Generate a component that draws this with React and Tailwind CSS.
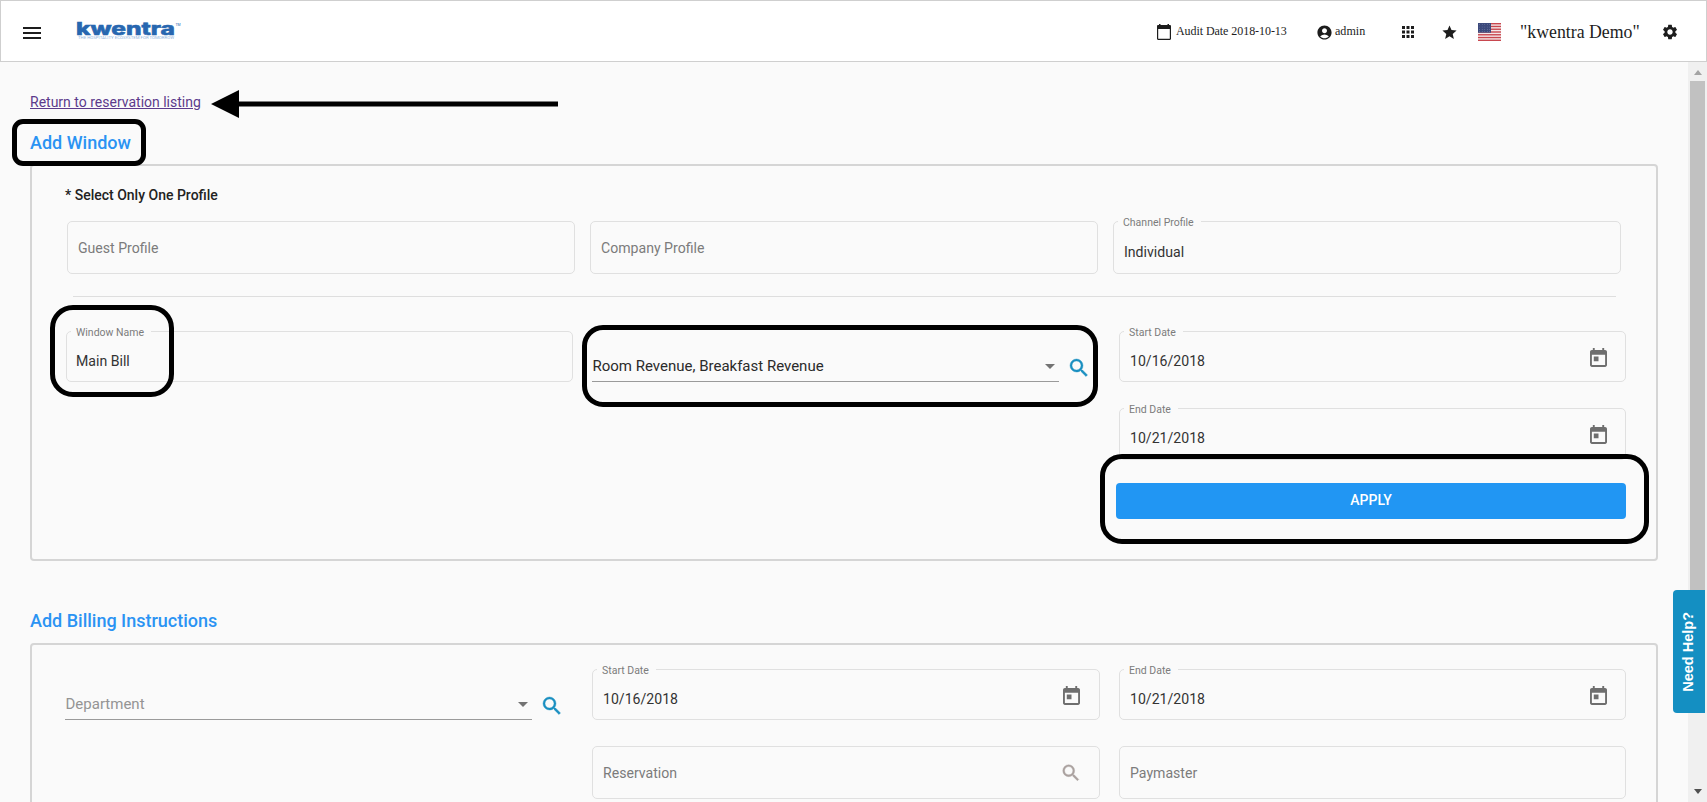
import React from "react";
import { MdMenu, MdAccountCircle, MdApps, MdStar, MdSettings } from "react-icons/md";

function SearchIcon({ className }) {
  return (
    <svg viewBox="0 0 24 24" fill="currentColor" stroke="currentColor" strokeWidth="0.400" className={className}>
      <path d="M15.500 14h-.79l-.28-.27A6.471 6.471 0 0 0 16 9.500 6.500 6.500 0 1 0 9.500 16c1.610 0 3.090-.59 4.230-1.570l.27.28v.79l5 4.990L20.490 19l-4.990-5zm-6 0C7.010 14 5 11.990 5 9.500S7.010 5 9.500 5 14 7.010 14 9.500 11.990 14 9.500 14z" />
    </svg>
  );
}

function CalendarIcon() {
  return (
    <svg viewBox="0 0 18 20" preserveAspectRatio="none" className="mt-px h-[19px] w-[17px]" fill="#6e6e6e">
      <path d="M16 2h-1V0h-2v2H5V0H3v2H2C.9 2 0 2.900 0 4v14c0 1.100.9 2 2 2h14c1.100 0 2-.9 2-2V4c0-1.100-.9-2-2-2zm0 16H2V7h14v11zM4 9h5v5H4z" />
    </svg>
  );
}

function AuditCalendarIcon() {
  return (
    <svg viewBox="0 0 14 16" className="h-[16px] w-[14px]" fill="#1d1d1d">
      <path d="M2 0h1.500v1h7V0H12v1h.8c.7 0 1.200.5 1.200 1.200v12.600c0 .7-.5 1.200-1.200 1.200H1.200C.5 16 0 15.500 0 14.800V2.200C0 1.500.5 1 1.200 1H2zM1.200 5v9.800h11.600V5z" />
    </svg>
  );
}

function Outlined({ className, label, value, placeholder, icon, pad = "pl-[10px]" }) {
  return (
    <div className={`relative flex items-center justify-between rounded-[5px] border border-[#e0e0e0] ${pad} ${className}`}>
      {label && (
        <span className="absolute left-[4px] top-[-6px] bg-[#fafafa] pl-[5px] pr-[7px] text-[10.500px] leading-[13px] text-[#7c7c7c]">
          {label}
        </span>
      )}
      {value ? (
        <span className="pt-[8px] text-[14.100px] leading-5 text-[#333]">{value}</span>
      ) : (
        <span className="text-[14.100px] leading-5 text-[#7c7c7c]">{placeholder}</span>
      )}
      {icon}
    </div>
  );
}

function SelectLine({ className, text, muted }) {
  return (
    <div className={`flex items-end ${className}`}>
      <div className="flex h-[32px] w-[467px] items-center justify-between border-b border-[#9a9a9a] pl-[0.500px] pt-px">
        <span className={`text-[15px] leading-5 ${muted ? "text-[#949494]" : "text-[#2b2b2b]"}`}>{text}</span>
        <svg viewBox="0 0 10 5" className="mr-[4px] h-[5px] w-[10px]"><path d="M0 0h10L5 5z" fill="#737373" /></svg>
      </div>
      <SearchIcon className="mb-[2px] ml-[8px] size-[24px] text-[#1a8fc1]" />
    </div>
  );
}

function Flag() {
  return (
    <svg viewBox="0 0 23 18" className="h-[18px] w-[23px]">
      <rect width="23" height="18" fill="#f4e8e8" />
      {[0, 1, 2, 3, 4, 5, 6].map((i) => (
        <rect key={i} y={i * 2.77} width="23" height="1.385" fill="#c8474f" />
      ))}
      <rect width="13" height="9.700" fill="#3c4a7c" />
      {[1.6, 4, 6.400, 8.600].map((y) =>
        [1.6, 4.200, 6.800, 9.400, 11.600].map((x) => <circle key={`${x}-${y}`} cx={x} cy={y} r="0.350" fill="#a7aecb" />)
      )}
    </svg>
  );
}

function Logo() {
  return (
    <svg viewBox="0 0 108 30" className="block h-[30px] w-[108px] overflow-visible">
      <text x="0" y="19.300" textLength="99" lengthAdjust="spacingAndGlyphs" fontFamily="Inter" fontWeight="800" fontSize="17" fill="#2767b0" stroke="#2767b0" strokeWidth="0.500">kwentra</text>
      <text x="99.500" y="10" fontFamily="Roboto" fontSize="3.500" fill="#2767b0">TM</text>
      <text x="2" y="23.300" textLength="96" lengthAdjust="spacingAndGlyphs" fontFamily="Roboto" fontSize="3" fill="#8fb3dc">THE HOSPITALITY ECOSYSTEM FOR TOMORROW</text>
    </svg>
  );
}

function Header() {
  return (
    <header className="flex h-[62px] shrink-0 items-center border border-[#cfcfcf] bg-white text-[#1d1d1d]">
      <MdMenu className="ml-[19px] mt-[3px] size-[24px]" />
      <div className="ml-[32px]"><Logo /></div>
      <div className="ml-auto flex items-center pt-[2px] font-['Liberation_Serif',serif]">
        <AuditCalendarIcon />
        <span className="-mt-[3px] ml-[5px] w-[111px] whitespace-nowrap text-[12px] tracking-[-0.060px]">Audit Date 2018-10-13</span>
        <MdAccountCircle className="ml-[29px] size-[17px]" />
        <span className="-mt-[2px] ml-[2px] w-[30px] text-[12.100px]">admin</span>
        <MdApps className="ml-[34px] size-[18px]" />
        <MdStar className="ml-[24px] size-[17px]" />
        <div className="ml-[20px]"><Flag /></div>
        <span className="ml-[19px] w-[121px] whitespace-nowrap text-[17.800px] leading-6">"kwentra Demo"</span>
        <MdSettings className="ml-[20px] mr-[27px] size-[18px]" />
      </div>
    </header>
  );
}

function Callout({ className }) {
  return <div className={`pointer-events-none absolute border-[5px] border-black ${className}`} />;
}

export default function App() {
  return (
    <div className="relative flex h-[802px] w-[1707px] flex-col overflow-hidden bg-[#fafafa] font-['Roboto',sans-serif]">
      <Header />
      <div className="flex min-h-0 flex-1">
        <main className="w-[1688px] overflow-hidden pl-[30px]">
          <a className="mt-[30px] block h-[20px] w-fit text-[14px] leading-5 text-[#5c3a8c] underline">Return to reservation listing</a>
          <h2 className="mt-[19px] h-[24px] text-[18px] font-medium leading-6 text-[#2a93f3]">Add Window</h2>

          <section className="mt-[9px] h-[397px] w-[1628px] rounded-[4px] border-2 border-[#d5d5d5] pl-[33px]">
            <h3 className="mt-[19px] h-[20px] text-[14px] font-medium leading-5 text-[#222]">* Select Only One Profile</h3>
            <div className="ml-[2px] mt-[16px] flex gap-[15px]">
              <Outlined className="h-[53px] w-[508px]" placeholder="Guest Profile" />
              <Outlined className="h-[53px] w-[508px]" placeholder="Company Profile" />
              <Outlined className="h-[53px] w-[508px]" label="Channel Profile" value="Individual" />
            </div>
            <hr className="ml-[8px] mt-[22px] w-[1543px] border-[#dedede]" />
            <div className="ml-px mt-[34px] flex">
              <Outlined className="h-[51px] w-[507px]" pad="pl-[9px]" label="Window Name" value="Main Bill" />
              <SelectLine className="ml-[19px] h-[51px] w-[527px]" text="Room Revenue, Breakfast Revenue" />
              <div className="-ml-[3px]">
                <Outlined className="ml-[3px] h-[51px] w-[507px] pr-[18px]" label="Start Date" value="10/16/2018" icon={<CalendarIcon />} />
                <Outlined className="ml-[3px] mt-[26px] h-[52px] w-[507px] pr-[18px]" label="End Date" value="10/21/2018" icon={<CalendarIcon />} />
                <button className="mt-[23px] flex h-[36px] w-[510px] items-center justify-center rounded-[4px] bg-[#2196f3] pb-px text-[14px] font-medium text-white">
                  APPLY
                </button>
              </div>
            </div>
          </section>

          <h2 className="mt-[48px] h-[24px] text-[18px] font-medium leading-6 text-[#2a93f3]">Add Billing Instructions</h2>
          <section className="mt-[10px] h-[396px] w-[1628px] rounded-[4px] border-2 border-[#d5d5d5] pl-[33px]">
            <div className="mt-[24px] flex">
              <SelectLine className="h-[51px] w-[527px]" text="Department" muted />
              <div className="flex flex-col gap-[26px]">
                <Outlined className="h-[51px] w-[508px] pr-[19px]" label="Start Date" value="10/16/2018" icon={<CalendarIcon />} />
                <Outlined className="h-[53px] w-[508px] pr-[17px]" placeholder="Reservation" icon={<SearchIcon className="mt-px size-[22px] text-[#aaa19f]" />} />
              </div>
              <div className="ml-[19px] flex flex-col gap-[26px]">
                <Outlined className="h-[51px] w-[507px] pr-[18px]" label="End Date" value="10/21/2018" icon={<CalendarIcon />} />
                <Outlined className="h-[53px] w-[507px]" placeholder="Paymaster" />
              </div>
            </div>
          </section>
        </main>
        <aside className="flex w-[19px] flex-col items-center justify-between bg-[#f0f0f0] pb-[8px] pt-[8px]">
          <svg viewBox="0 0 8 5" className="h-[5px] w-[8px]"><path d="M0 5h8L4 0z" fill="#a3a3a3" /></svg>
          <div className="mb-auto mt-[6px] h-[525px] w-[15px] bg-[#c1c1c1]" />
          <svg viewBox="0 0 8 5" className="h-[5px] w-[8px]"><path d="M0 0h8L4 5z" fill="#505050" /></svg>
        </aside>
      </div>

      <div className="absolute left-[1673px] top-[590px] flex h-[123px] w-[32px] items-center justify-center rounded-l-[4px] bg-[#148fc2]">
        <span className="rotate-180 whitespace-nowrap font-['Liberation_Sans',sans-serif] text-[14.500px] font-bold text-white [writing-mode:vertical-rl]">Need Help?</span>
      </div>

      <svg viewBox="0 0 347 28" className="absolute left-[211px] top-[90px] h-[28px] w-[347px]">
        <path d="M0 14L28 0v11.500h319v5H28V28z" fill="#000" />
      </svg>
      <Callout className="left-[12px] top-[119px] h-[47px] w-[134px] rounded-[11px]" />
      <Callout className="left-[50px] top-[305px] h-[92px] w-[124px] rounded-[23px]" />
      <Callout className="left-[582px] top-[325px] h-[82px] w-[516px] rounded-[21px]" />
      <Callout className="left-[1100px] top-[454px] h-[90px] w-[549px] rounded-[22px]" />
    </div>
  );
}
